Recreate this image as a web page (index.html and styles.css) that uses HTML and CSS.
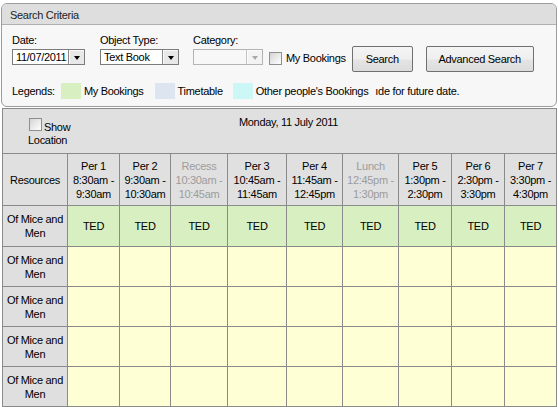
FILE: index.html
```html
<!DOCTYPE html>
<html>
<head>
<meta charset="utf-8">
<title>Bookings</title>
<link rel="stylesheet" href="styles.css">
</head>
<body>
<div class="criteria">
  <div class="crit-head">Search Criteria</div>
  <div class="crit-body">
    <div class="fields">
      <div class="field">
        <div class="lbl">Date:</div>
        <div class="combo w-date"><span class="val">11/07/2011</span><span class="drop"><span class="tri"></span></span></div>
      </div>
      <div class="field f-type">
        <div class="lbl">Object Type:</div>
        <div class="combo w-type"><span class="val">Text Book</span><span class="drop"><span class="tri"></span></span></div>
      </div>
      <div class="field f-cat">
        <div class="lbl">Category:</div>
        <div class="combo w-cat disabled"><span class="val"></span><span class="drop"><span class="tri"></span></span></div>
      </div>
      <div class="chk"><span class="box"></span><span class="chk-txt">My Bookings</span></div>
      <button class="btn b-search">Search</button>
      <button class="btn b-adv">Advanced Search</button>
    </div>
    <div class="legends">
      <span>Legends:</span>
      <span class="sw sw-mine"></span><span class="leg-txt">My Bookings</span>
      <span class="sw sw-tt"></span><span class="leg-txt">Timetable</span>
      <span class="sw sw-oth"></span><span class="leg-txt">Other people's Bookings</span>
      <span class="leg-note">ıde for future date.</span>
    </div>
  </div>
</div>

<table class="grid">
  <colgroup>
    <col class="c1"><col class="c2"><col class="c3"><col class="c4"><col class="c5">
    <col class="c6"><col class="c7"><col class="c8"><col class="c9"><col class="c10">
  </colgroup>
  <tr class="r-top">
    <td colspan="10" class="top-cell">
      <div class="top-inner">
        <div class="showloc">
          <div class="show-line"><span class="box"></span><span>Show</span></div>
          <div class="loc">Location</div>
        </div>
        <div class="date">Monday, 11 July 2011</div>
      </div>
    </td>
  </tr>
  <tr class="r-per">
    <th class="hd">Resources</th>
    <th class="hd">Per 1<br>8:30am -<br>9:30am</th>
    <th class="hd">Per 2<br>9:30am -<br>10:30am</th>
    <th class="hd dim">Recess<br>10:30am -<br>10:45am</th>
    <th class="hd">Per 3<br>10:45am -<br>11:45am</th>
    <th class="hd">Per 4<br>11:45am -<br>12:45pm</th>
    <th class="hd dim">Lunch<br>12:45pm -<br>1:30pm</th>
    <th class="hd">Per 5<br>1:30pm -<br>2:30pm</th>
    <th class="hd">Per 6<br>2:30pm -<br>3:30pm</th>
    <th class="hd">Per 7<br>3:30pm -<br>4:30pm</th>
  </tr>
  <tr class="r-ted">
    <th class="res">Of Mice and Men</th>
    <td class="mine">TED</td><td class="mine">TED</td><td class="mine">TED</td><td class="mine">TED</td><td class="mine">TED</td>
    <td class="mine">TED</td><td class="mine">TED</td><td class="mine">TED</td><td class="mine">TED</td>
  </tr>
  <tr class="r-free">
    <th class="res">Of Mice and Men</th>
    <td class="free"></td><td class="free"></td><td class="free"></td><td class="free"></td><td class="free"></td>
    <td class="free"></td><td class="free"></td><td class="free"></td><td class="free"></td>
  </tr>
  <tr class="r-free">
    <th class="res">Of Mice and Men</th>
    <td class="free"></td><td class="free"></td><td class="free"></td><td class="free"></td><td class="free"></td>
    <td class="free"></td><td class="free"></td><td class="free"></td><td class="free"></td>
  </tr>
  <tr class="r-free">
    <th class="res">Of Mice and Men</th>
    <td class="free"></td><td class="free"></td><td class="free"></td><td class="free"></td><td class="free"></td>
    <td class="free"></td><td class="free"></td><td class="free"></td><td class="free"></td>
  </tr>
  <tr class="r-free">
    <th class="res">Of Mice and Men</th>
    <td class="free"></td><td class="free"></td><td class="free"></td><td class="free"></td><td class="free"></td>
    <td class="free"></td><td class="free"></td><td class="free"></td><td class="free"></td>
  </tr>
</table>
</body>
</html>
```

FILE: styles.css
```css
body {
  margin: 0;
  background: #ffffff;
  font-family: "Liberation Sans", Arial, sans-serif;
  font-size: 11px;
  line-height: 13px;
  letter-spacing: -0.3px;
  color: #000;
}

/* ---------- search criteria panel ---------- */
.criteria {
  margin: 3px 0 0 1px;
  width: 556px;
  box-sizing: border-box;
  border: 1px solid #9c9c9c;
  border-radius: 6px;
  background: #f7f7f7;
  overflow: hidden;
}
.crit-head {
  height: 21px;
  box-sizing: border-box;
  padding: 5px 0 0 8px;
  background: #dedede;
  border-bottom: 1px solid #b0b0b0;
  color: #222;
}
.crit-body {
  padding: 9px 10px 7px;
}
.fields {
  display: flex;
  align-items: flex-start;
  height: 38px;
}
.field {
  display: flex;
  flex-direction: column;
}
.f-type { margin-left: 15px; }
.f-cat { margin-left: 14px; }
.lbl {
  height: 13px;
  margin-bottom: 2px;
}
.combo {
  display: flex;
  height: 16px;
  box-sizing: border-box;
  border: 1px solid #7c7c7c;
  background: #fff;
}
.w-date { width: 73px; }
.w-type { width: 79px; }
.w-cat { width: 70px; }
.val {
  flex: 1;
  min-width: 0;
  padding-left: 3px;
  overflow: hidden;
  white-space: nowrap;
  line-height: 14px;
}
.drop {
  width: 15px;
  flex: none;
  display: flex;
  align-items: center;
  justify-content: center;
  border-left: 1px solid #8a8a8a;
  background: #e8e8e8;
  box-shadow: inset 1px 1px #fafafa;
}
.tri {
  width: 0;
  height: 0;
  border-left: 3.5px solid transparent;
  border-right: 3.5px solid transparent;
  border-top: 4px solid #000;
  margin-top: 1px;
}
.combo.disabled {
  border-color: #b4b4b4;
  background: #f7f7f7;
}
.combo.disabled .drop {
  border-left-color: #c4c4c4;
  background: #f3f3f3;
}
.combo.disabled .tri {
  border-top-color: #a9a9a9;
}

.chk {
  display: flex;
  align-items: center;
  margin: 18px 0 0 6px;
}
.box {
  display: inline-block;
  flex: none;
  width: 13px;
  height: 13px;
  box-sizing: border-box;
  border: 1px solid #8e8f8f;
  background: linear-gradient(135deg, #d4d4d4 0%, #f2f2f2 70%, #fdfdfd 100%);
}
.chk-txt { margin-left: 4px; }

.btn {
  margin-top: 12px;
  height: 26px;
  padding: 0;
  box-sizing: border-box;
  border: 1px solid #707070;
  border-radius: 2px;
  background: linear-gradient(#f4f4f4 0%, #eeeeee 50%, #e4e4e4 55%, #dcdcdc 100%);
  font: inherit;
  letter-spacing: inherit;
  color: #000;
}
.b-search { width: 61px; margin-left: 6px; }
.b-adv { width: 108px; margin-left: 13px; }

.legends {
  display: flex;
  align-items: center;
  height: 16px;
  margin-top: 11px;
  white-space: nowrap;
}
.sw {
  width: 20px;
  height: 16px;
  flex: none;
}
.sw-mine { background: #d8efc2; margin-left: 6px; }
.sw-tt { background: #dde6f0; margin-left: 11px; }
.sw-oth { background: #cdf6f6; margin-left: 10px; }
.leg-txt { margin-left: 3px; }
.leg-note { margin-left: 7px; }

/* ---------- booking grid ---------- */
.grid {
  margin: 1px 0 0 2px;
  width: 555px;
  border-collapse: collapse;
  table-layout: fixed;
}
.c1 { width: 65px; }
.c2 { width: 52px; }
.c3 { width: 51px; }
.c4 { width: 57px; }
.c5 { width: 59px; }
.c6 { width: 56px; }
.c7 { width: 56px; }
.c8 { width: 53px; }
.c9 { width: 53px; }
.c10 { width: 52px; }

.grid td,
.grid th {
  border: 1px solid #8a8a8a;
  padding: 0;
  text-align: center;
  vertical-align: middle;
  font-weight: normal;
}
.r-top { height: 45px; }
.r-per { height: 52px; }
.r-ted { height: 41px; }
.r-free { height: 40px; }

.top-cell {
  background: #e0e0e0;
}
.grid .top-cell {
  vertical-align: top;
  text-align: left;
}
.top-inner {
  display: flex;
}
.showloc {
  width: 70px;
  flex: none;
  box-sizing: border-box;
  padding: 9px 0 0 26px;
}
.show-line {
  display: flex;
  align-items: flex-end;
  white-space: nowrap;
}
.show-line .box {
  margin: 0 2px 3px 0;
}
.loc { margin-left: -1px; }
.date {
  flex: 1;
  text-align: center;
  padding: 7px 52px 0 0;
}

.hd {
  background: #e0e0e0;
  line-height: 14px;
}
.dim { color: #9c9c9c; }
.res {
  background: #dfdfdf;
  line-height: 14px;
}
.mine { background: #d8efc2; }
.free { background: #ffffd5; }
```
